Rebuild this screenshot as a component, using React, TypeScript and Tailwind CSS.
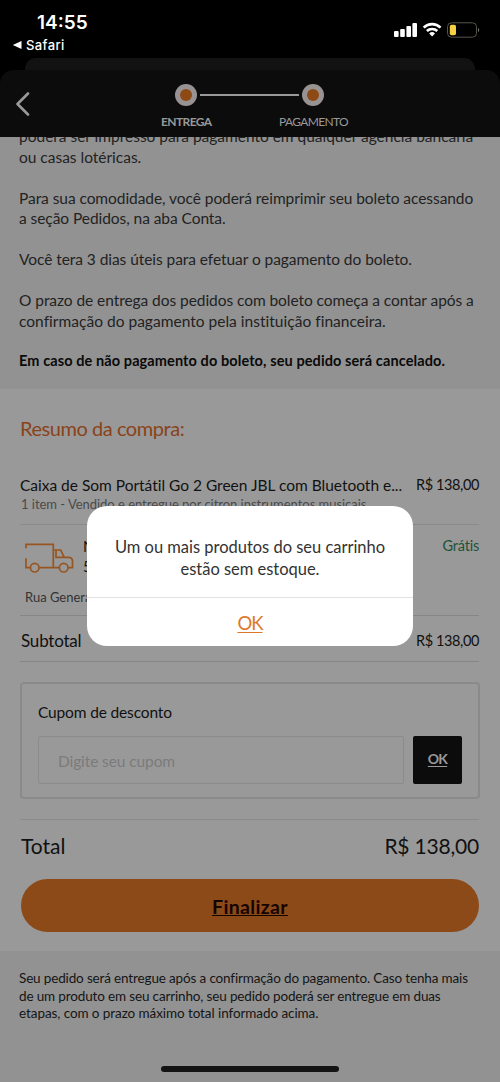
import React from 'react';

const StatusBar: React.FC = () => (
  <div className="flex h-[58px] justify-between bg-black font-['Inter',sans-serif] text-white">
    <div className="pl-3 pt-[12px]">
      <div className="pl-[25px] text-[19px] font-semibold leading-[22px]">14:55</div>
      <div className="mt-[2px] flex items-center gap-1 text-[13px] font-medium leading-[18px] tracking-[0.4px]">
        <svg width="10" height="10" viewBox="0 0 10 10" fill="currentColor">
          <path d="M0.8 5 9.5 1v8z" />
        </svg>
        Safari
      </div>
    </div>
    <svg className="mt-5 mr-5" width="86" height="20" viewBox="0 0 86 20" fill="none">
      {/* Signal */}
      <g fill="#fff">
        <rect x="0" y="11" width="4.6" height="6" rx="1" />
        <rect x="6.2" y="9" width="4.6" height="8" rx="1" />
        <rect x="12.4" y="6" width="4.6" height="11" rx="1" />
        <rect x="18.4" y="3" width="4.6" height="14" rx="1" />
      </g>
      {/* Wifi */}
      <g stroke="#fff" strokeWidth="2.6">
        <path d="M29.7 7.6a12 12 0 0 1 16.8 0" />
        <path d="M32.9 11a7.6 7.6 0 0 1 10.4 0" />
      </g>
      <path d="M35.2 13.4a4.2 4.2 0 0 1 5.8 0L38.1 16.6z" fill="#fff" />
      {/* Battery */}
      <rect x="53.5" y="2.8" width="29" height="14.4" rx="4" stroke="#57534a" />
      <rect x="55.8" y="4.8" width="6.2" height="10.4" rx="1.8" fill="#f6cf45" />
      <path d="M84 8v4c1.6-.6 1.6-3.4 0-4z" fill="#777" />
    </svg>
  </div>
);

const StepDot: React.FC = () => (
  <div className="flex size-[22px] items-center justify-center rounded-full bg-[#999292]">
    <div className="size-3 rounded-full bg-[#8d4a14]" />
  </div>
);

const Header: React.FC = () => (
  <div className="bg-black">
    <div className="mx-[25px] h-3 rounded-t-[11px] bg-[#121212]" />
    <div className="flex h-[67px] rounded-t-[14px] bg-[#0c0c0c]">
      <svg className="ml-4 mt-[22px]" width="14" height="24" viewBox="0 0 14 24" fill="none">
        <path d="M12 1.5 1.5 12 12 22.5" stroke="#999" strokeWidth="2.6" strokeLinecap="round" strokeLinejoin="round" />
      </svg>
      <div className="ml-[122px] mt-[14px] w-[196px] text-[12px] leading-[14px] text-[#999]">
        <div className="flex items-center justify-center gap-[3px] pr-px">
          <StepDot />
          <div className="h-[2px] w-[99px] bg-[#999]" />
          <StepDot />
        </div>
        <div className="mt-[9px] flex justify-between pl-[9px]">
          <span className="font-bold tracking-[-0.6px]">ENTREGA</span>
          <span className="tracking-[-0.65px]">PAGAMENTO</span>
        </div>
      </div>
    </div>
  </div>
);

const BoletoInfo: React.FC = () => (
  <section className="h-[252px] overflow-hidden bg-[#929292] px-[19px] text-[15.5px] leading-[20.5px] tracking-[-0.06px] text-[#222]">
    <p className="-mt-[11px] whitespace-nowrap tracking-[-0.01px]">
      poderá ser impresso para pagamento em qualquer agência bancária
      <br />
      ou casas lotéricas.
    </p>
    <p className="mt-[20.5px] whitespace-nowrap">
      Para sua comodidade, você poderá reimprimir seu boleto acessando
      <br />a seção Pedidos, na aba Conta.
    </p>
    <p className="mt-[20.5px]">Você tera 3 dias úteis para efetuar o pagamento do boleto.</p>
    <p className="mt-[20.5px] whitespace-nowrap">
      O prazo de entrega dos pedidos com boleto começa a contar após a
      <br />
      <span className="tracking-[0.02px]">confirmação do pagamento pela instituição financeira.</span>
    </p>
    <p className="mt-[19.5px] whitespace-nowrap text-[14.5px] font-bold tracking-[0.1px] text-[#0a0a0a]">
      Em caso de não pagamento do boleto, seu pedido será cancelado.
    </p>
  </section>
);

const Truck: React.FC = () => (
  <svg width="50" height="32" viewBox="25 542 50 32" fill="none" stroke="#975621" strokeWidth="1.7">
    <path d="M26 548.3v-4h27.3v23.4M26 558.3v9.4h4.4M39.4 567.7h19.8M68.2 567.7h4.3v-6.4c0-2.4-1.8-4-4.2-4h-4L60.6 550h-7.3M56 550v7.3h8.3" />
    <circle cx="34.7" cy="567.7" r="4.3" />
    <circle cx="63.7" cy="567.7" r="4.3" />
  </svg>
);

const Summary: React.FC = () => (
  <section className="h-[562px] bg-[#999] pr-[21px] pl-5 text-[#111]">
    <h2 className="pt-[26px] text-[20px] leading-[26px] tracking-[-0.45px] text-[#8a4319]">Resumo da compra:</h2>

    <div className="mt-[31px] h-[53px] border-b border-[#8a8a8a] pt-[2px]">
      <div className="flex justify-between whitespace-nowrap text-[15.5px] leading-[22px]">
        <span className="tracking-[-0.01px]">Caixa de Som Portátil Go 2 Green JBL com Bluetooth e...</span>
        <span className="text-[14.5px] tracking-[-0.4px]">R$ 138,00</span>
      </div>
      <div className="pl-px text-[13px] leading-[16px] tracking-[-0.03px] text-[#4a4a4a]">
        1 item - Vendido e entregue por citron instrumentos musicais
      </div>
    </div>

    <div className="h-[91px] border-b border-[#868686] pl-[5px]">
      <div className="flex pt-[11px]">
        <div className="pt-[6px]">
          <Truck />
        </div>
        <div className="ml-[8px] w-40 text-[15px] leading-[20px]">
          Normal
          <br />5 dias úteis
        </div>
        <span className="ml-auto text-[14.5px] leading-[19px] tracking-[-0.2px] text-[#1e5237]">Grátis</span>
      </div>
      <div className="mt-[12px] text-[13px] leading-[18px] text-[#333]">Rua General</div>
    </div>

    <div className="flex h-[46px] items-center justify-between border-b border-[#868686] pt-[4px] text-[17px]">
      <span className="pl-px tracking-[-0.2px]">Subtotal</span>
      <span className="text-[14.5px] tracking-[-0.4px]">R$ 138,00</span>
    </div>

    <div className="-mr-px mt-5 h-[117px] rounded-[4px] border-2 border-[#8a8a8a] px-4 pt-[17px]">
      <div className="text-[15.5px] leading-[22px] tracking-[-0.15px]">Cupom de desconto</div>
      <div className="mt-[13px] flex gap-[9px]">
        <div className="flex h-12 w-[366px] items-center rounded-[2px] border border-[#8b8b8b] pt-[3px] pl-[19px] text-[15.5px] tracking-[-0.1px] text-[#7b7b7b]">
          Digite seu cupom
        </div>
        <button className="h-12 w-[49px] rounded-[2px] bg-[#0c0c0c] pb-[3px] text-[14px] font-bold tracking-[-0.8px] text-[#999] underline underline-offset-2">
          OK
        </button>
      </div>
    </div>

    <div className="mt-5 flex items-center justify-between border-t border-[#8a8a8a] pt-[11px] text-[21px] leading-[30px]">
      <span className="pl-px">Total</span>
      <span className="tracking-[-0.2px]">R$ 138,00</span>
    </div>

    <button className="mt-[18px] ml-px h-[53px] w-[458px] rounded-full bg-[#8d4a19] pt-[3px] text-[19.5px] font-bold tracking-[0.35px] text-[#150400] underline">
      Finalizar
    </button>
  </section>
);

const Alert: React.FC = () => (
  <div className="absolute left-[87px] top-[506px] h-[140px] w-[326px] rounded-[20px] bg-white text-center">
    <p className="h-[92px] whitespace-nowrap border-b border-[#e2e2e2] pt-[30px] text-[16.5px] leading-[22px] tracking-[-0.02px] text-[#333]">
      Um ou mais produtos do seu carrinho
      <br />
      estão sem estoque.
    </p>
    <button className="mt-[12px] text-[18.5px] leading-[26px] tracking-[-1px] text-[#dc7828] underline underline-offset-2">
      OK
    </button>
  </div>
);

export default function App() {
  return (
    <div className="relative flex h-[1082px] w-[500px] flex-col overflow-hidden bg-[#929292] font-['Lato','Noto_Sans',sans-serif]">
      <StatusBar />
      <Header />
      <BoletoInfo />
      <Summary />
      <footer className="flex flex-1 flex-col px-[19px] pt-[19px] text-[13.5px] leading-[17.5px] tracking-[-0.15px] text-[#151515]">
        <p className="whitespace-nowrap">
          Seu pedido será entregue após a confirmação do pagamento. Caso tenha mais
          <br />
          de um produto em seu carrinho, seu pedido poderá ser entregue em duas
          <br />
          <span className="tracking-[-0.08px]">etapas, com o prazo máximo total informado acima.</span>
        </p>
        <div className="mx-auto mt-auto mb-[10px] h-[6px] w-[178px] rounded-full bg-[#141414]" />
      </footer>
      <Alert />
    </div>
  );
}
